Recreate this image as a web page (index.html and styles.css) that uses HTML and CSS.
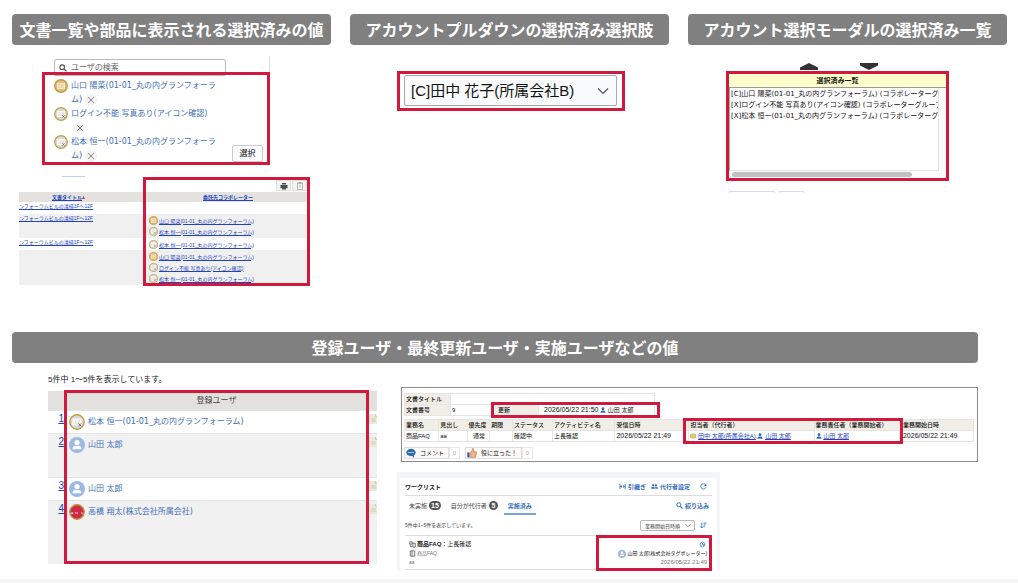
FILE: index.html
```html
<!DOCTYPE html>
<html lang="ja">
<head>
    <meta charset="UTF-8">
    <meta name="viewport" content="width=device-width, initial-scale=1.0">
    <title>ユーザ表示箇所の一覧</title>
    <link rel="stylesheet" href="styles.css">
</head>
<body>
    <!-- 共通アイコン -->
    <svg class="sprite" aria-hidden="true">
        <symbol id="user-gold" viewBox="0 0 16 16">
            <circle cx="8" cy="8" r="7.2" fill="#d9b974" stroke="#bf9a45" stroke-width="1.4"/>
            <rect x="4" y="4.8" width="8" height="6.4" fill="#e6cf9b" stroke="#fff8e6" stroke-width=".8"/>
            <path d="M5.5 6.2v3.4M7 7h2M7 9h2M10.5 6.2v3.4" stroke="#fff8e6" stroke-width=".8"/>
        </symbol>
        <symbol id="user-photo" viewBox="0 0 16 16">
            <circle cx="8" cy="8" r="7.2" fill="#d8d8d8" stroke="#c4a044" stroke-width="1.4"/>
            <rect x="4" y="5" width="8" height="6" fill="#e6e6e6" stroke="#fff" stroke-width=".9"/>
            <path d="M5.5 6.5v3M7 7h2" stroke="#fff" stroke-width=".8"/>
            <path d="M9.5 9.5l2.6 2.6M12.1 9.5l-2.6 2.6" stroke="#555" stroke-width=".8"/>
        </symbol>
        <symbol id="user-blue" viewBox="0 0 16 16">
            <circle cx="8" cy="8" r="8" fill="#9db9e2"/>
            <circle cx="8" cy="5.6" r="2.6" fill="#fff"/>
            <path d="M3.6 12.2c0-2.4 1.5-3.4 2.7-3.4.5.5 2.9.5 3.4 0 1.2 0 2.7 1 2.7 3.4z" fill="#fff"/>
        </symbol>
        <symbol id="user-red" viewBox="0 0 16 16">
            <circle cx="8" cy="8" r="7.2" fill="#cf2b49" stroke="#c0913c" stroke-width="1.4"/>
            <path d="M2.2 8.2v2M3.6 8.2v2M6 9h3M13 8v2.2" stroke="#f3c6ce" stroke-width="1"/>
        </symbol>
        <symbol id="person" viewBox="0 0 8 8">
            <circle cx="4" cy="2.3" r="1.9" fill="#2f6fb5"/>
            <path d="M.6 7.6c0-2.3 1.3-3.1 3.4-3.1s3.4.8 3.4 3.1z" fill="#2f6fb5"/>
        </symbol>
        <symbol id="search" viewBox="0 0 8 8">
            <circle cx="3.2" cy="3.2" r="2.3" fill="none" stroke="currentColor" stroke-width="1.1"/>
            <path d="M5 5l2.4 2.4" stroke="currentColor" stroke-width="1.3"/>
        </symbol>
        <symbol id="chevron" viewBox="0 0 12 8">
            <path d="M1 1.5l5 5 5-5" fill="none" stroke="currentColor" stroke-width="1.2"/>
        </symbol>
        <symbol id="doc" viewBox="0 0 10 10">
            <path d="M0 0h6.5L9 2.5V10H0z" fill="#ece8d8"/>
            <path d="M6.5 0v2.5H9M2 5h5M2 7h5" fill="none" stroke="#cfcab6" stroke-width=".9"/>
        </symbol>
    </svg>

    <main>
        <div class="top">
            <section>
                <h2>文書一覧や部品に表示される選択済みの値</h2>
                <div class="picker">
                    <div class="picker-head">
                        <label class="search-box">
                            <svg><use href="#search"/></svg>
                            <input type="text" placeholder="ユーザの検索" aria-label="ユーザの検索">
                        </label>
                    </div>
                    <div class="mark picker-body">
                        <ul class="picked">
                            <li><svg class="avatar"><use href="#user-gold"/></svg><div>山口 陽菜(01-01_丸の内グランフォーラム)<button class="remove" aria-label="削除"><svg viewBox="0 0 8 8"><path d="M1 1l6 6M7 1l-6 6"/></svg></button></div></li>
                            <li><svg class="avatar"><use href="#user-photo"/></svg><div>ログイン不能 写真あり(アイコン確認)<button class="remove" aria-label="削除"><svg viewBox="0 0 8 8"><path d="M1 1l6 6M7 1l-6 6"/></svg></button></div></li>
                            <li><svg class="avatar"><use href="#user-photo"/></svg><div>松本 恒一(01-01_丸の内グランフォーラム)<button class="remove" aria-label="削除"><svg viewBox="0 0 8 8"><path d="M1 1l6 6M7 1l-6 6"/></svg></button></div></li>
                        </ul>
                        <button class="select-button">選択</button>
                    </div>
                </div>

                <div class="stub"></div>
                <div class="listing">
                    <div class="listing-tools">
                        <button aria-label="印刷"><svg viewBox="0 0 8 8"><path d="M2 1h4v1.500H2zM.5 3h7v3.200h-7zM2 6h4v1.500H2z" fill="#4a4e58"/></svg></button>
                        <button aria-label="クリップボード"><svg viewBox="0 0 8 8"><path d="M1.500 1h5v6.500h-5zM3 .6h2v1H3z" fill="#f6f6f2" stroke="#9a9a92" stroke-width=".7"/><path d="M3 3.500h2M3 5h2" stroke="#aaa" stroke-width=".6"/></svg></button>
                    </div>
                    <table class="docs">
                        <colgroup><col class="docs-title"><col class="docs-gap"><col></colgroup>
                        <thead>
                            <tr><th><a href="#">文書タイトル</a><svg class="sort-mark" viewBox="0 0 4 4"><path d="M2 0l2 4H0z" fill="#d33"/></svg></th><th></th><th><a href="#">委託先コラボレーター</a></th></tr>
                        </thead>
                        <tbody>
                            <tr><td><a href="#">ンフォーラムビルの清掃1F〜12F</a></td><td></td><td></td></tr>
                            <tr>
                                <td><a href="#">ンフォーラムビルの清掃1F〜12F</a></td><td></td>
                                <td>
                                    <div class="person"><svg><use href="#user-gold"/></svg><a href="#">山口 陽菜(01-01_丸の内グランフォーラム)</a></div>
                                    <div class="person"><svg><use href="#user-photo"/></svg><a href="#">松本 恒一(01-01_丸の内グランフォーラム)</a></div>
                                </td>
                            </tr>
                            <tr>
                                <td><a href="#">ンフォーラムビルの清掃1F〜12F</a></td><td></td>
                                <td><div class="person"><svg><use href="#user-photo"/></svg><a href="#">松本 恒一(01-01_丸の内グランフォーラム)</a></div></td>
                            </tr>
                            <tr>
                                <td></td><td></td>
                                <td>
                                    <div class="person"><svg><use href="#user-gold"/></svg><a href="#">山口 陽菜(01-01_丸の内グランフォーラム)</a></div>
                                    <div class="person"><svg><use href="#user-photo"/></svg><a href="#">ログイン不能 写真あり(アイコン確認)</a></div>
                                    <div class="person"><svg><use href="#user-photo"/></svg><a href="#">松本 恒一(01-01_丸の内グランフォーラム)</a></div>
                                </td>
                            </tr>
                        </tbody>
                    </table>
                    <div class="mark over over-docs"></div>
                </div>
            </section>

            <section>
                <h2>アカウントプルダウンの選択済み選択肢</h2>
                <div class="mark pulldown">
                    <select aria-label="アカウント">
                        <option>[C]田中 花子(所属会社B)</option>
                    </select>
                    <svg><use href="#chevron"/></svg>
                </div>
            </section>

            <section>
                <h2>アカウント選択モーダルの選択済み一覧</h2>
                <div class="arrows">
                    <svg viewBox="0 0 18 7"><path d="M0 7V4.500L9 0l9 4.500V7z" fill="#333"/></svg>
                    <svg viewBox="0 0 18 7"><path d="M0 0h18v2.500L9 7 0 2.500z" fill="#333"/></svg>
                </div>
                <div class="mark modal-list">
                    <label for="selected">選択済み一覧</label>
                    <select id="selected" multiple size="3">
                        <option>[C]山口 陽菜(01-01_丸の内グランフォーラム) (コラボレーターグループ)</option>
                        <option>[X]ログイン不能 写真あり(アイコン確認) (コラボレーターグループ)</option>
                        <option>[X]松本 恒一(01-01_丸の内グランフォーラム) (コラボレーターグループ)</option>
                    </select>
                    <div class="scroll"><div class="thumb"></div></div>
                </div>
                <div class="modal-buttons"><span class="wide"></span><span></span></div>
            </section>
        </div>

        <section class="bottom">
            <h2>登録ユーザ・最終更新ユーザ・実施ユーザなどの値</h2>
            <div class="columns">
                <div class="registered">
                    <p>5件中 1〜5件を表示しています。</p>
                    <div class="registered-wrap">
                        <table class="users">
                            <colgroup><col class="users-no"><col><col class="users-doc"></colgroup>
                            <thead><tr><th></th><th>登録ユーザ</th><th></th></tr></thead>
                            <tbody>
                                <tr><td><a href="#">1</a></td><td><div class="user"><svg><use href="#user-photo"/></svg>松本 恒一(01-01_丸の内グランフォーラム)</div></td><td><svg class="doc"><use href="#doc"/></svg></td></tr>
                                <tr class="tall"><td><a href="#">2</a></td><td><div class="user"><svg><use href="#user-blue"/></svg>山田 太郎</div></td><td><svg class="doc"><use href="#doc"/></svg></td></tr>
                                <tr><td><a href="#">3</a></td><td><div class="user"><svg><use href="#user-blue"/></svg>山田 太郎</div></td><td><svg class="doc"><use href="#doc"/></svg></td></tr>
                                <tr class="taller"><td><a href="#">4</a></td><td><div class="user"><svg><use href="#user-red"/></svg>高橋 翔太(株式会社所属会社)</div></td><td><svg class="doc"><use href="#doc"/></svg></td></tr>
                            </tbody>
                        </table>
                        <div class="mark over over-users"></div>
                    </div>
                </div>

                <div class="right">
                    <div class="document">
                        <div class="summary">
                            <table class="grid-table">
                                <colgroup><col class="w-label"><col class="w-no"><col class="w-label"><col></colgroup>
                                <tr><th>文書タイトル</th><td colspan="3"></td></tr>
                                <tr><th>文書番号</th><td>9</td><th class="updated">更新</th><td class="updated-by"><span class="date">2026/05/22 21:50</span> <svg class="mini"><use href="#person"/></svg> 山田 太郎</td></tr>
                            </table>
                            <div class="mark over over-updated"></div>
                        </div>
                        <div class="tasks">
                            <table class="grid-table">
                                <colgroup><col class="c1"><col class="c2"><col class="c3"><col class="c4"><col class="c5"><col class="c6"><col class="c7"><col class="c8"><col class="c9"><col></colgroup>
                                <tr><th>業務名</th><th>見出し</th><th>優先度</th><th>期限</th><th>ステータス</th><th>アクティビティ名</th><th>受信日時</th><th>担当者（代行者）</th><th>業務責任者（業務開始者）</th><th>業務開始日時</th></tr>
                                <tr>
                                    <td>商品FAQ</td><td>aa</td><td class="center">通常</td><td></td><td>確認中</td><td>上長確認</td>
                                    <td class="date">2026/05/22 21:49</td>
                                    <td><svg class="mini" viewBox="0 0 8 8"><rect x=".5" y="1.500" width="7" height="5" rx="1" fill="#f3dfab" stroke="#c79a3c"/><path d="M2 4h1.500M4.500 4H6" stroke="#a67c22"/></svg> <a href="#">田中 太郎(所属会社A)</a>,<svg class="mini"><use href="#person"/></svg> <a href="#">山田 太郎</a></td>
                                    <td><svg class="mini"><use href="#person"/></svg> <a href="#">山田 太郎</a></td>
                                    <td class="date">2026/05/22 21:49</td>
                                </tr>
                            </table>
                            <div class="mark over over-owner"></div>
                        </div>
                        <div class="reactions">
                            <button><svg viewBox="0 0 10 10"><ellipse cx="5" cy="4.500" rx="4.700" ry="3.700" fill="#2d6db4"/><path d="M5.500 7.500l2.500 2.200V7z" fill="#2d6db4"/><path d="M2.400 4.500h1.200M4.400 4.500h1.200M6.400 4.500h1.200" stroke="#fff" stroke-width="1.200"/></svg>コメント</button><span class="count">0</span>
                            <button class="like"><svg viewBox="0 0 10 10"><path d="M.3 4.500h2.200v5H.3z" fill="#2f5f98"/><path d="M3 4.800L5 3l.4-2.500c1.400-.3 1.600 1.200 1 3.300h3v1.500L8.600 9.300H3z" fill="#f2b48a" stroke="#b06f45" stroke-width=".6"/></svg>役に立った！</button><span class="count">0</span>
                        </div>
                    </div>

                    <div class="worklist">
                        <div class="card">
                            <div class="row card-head">
                                <h3>ワークリスト</h3>
                                <div class="actions">
                                    <a href="#"><svg viewBox="0 0 8 8"><path d="M1 1v6M7 1v6M1 4h1.800M5.200 4H7M2.800 2.600v2.800M5.200 2.600v2.800" fill="none" stroke="currentColor" stroke-width="1"/></svg>引継ぎ</a>
                                    <a href="#"><svg viewBox="0 0 8 8"><circle cx="2.500" cy="2.700" r="1.300" fill="currentColor"/><circle cx="5.700" cy="2.700" r="1.300" fill="currentColor"/><path d="M.2 6.500c0-3 4.200-3 4.200 0zM5 6.500c0-1-.2-1.400-.5-1.800 1.300-.9 3.300-.2 3.300 1.800z" fill="currentColor"/></svg>代行者設定</a>
                                    <button class="plain" aria-label="更新"><svg viewBox="0 0 8 8"><path d="M6.700 5A3 3 0 1 1 6.200 2" fill="none" stroke="currentColor"/><path d="M7.200.6v2.700H4.500z" fill="currentColor"/></svg></button>
                                </div>
                            </div>
                            <div class="row tabs">
                                <a href="#">未実施<b>15</b></a>
                                <a href="#">自分が代行者<b>5</b></a>
                                <a href="#" class="active">実施済み</a>
                                <a href="#" class="filter"><svg><use href="#search"/></svg>絞り込み</a>
                            </div>
                            <div class="row sorting">
                                <span>5件中1~5件を表示しています。</span>
                                <label class="sort">
                                    <select aria-label="並び順"><option>業務開始日時順</option></select>
                                    <svg viewBox="0 0 12 8"><use href="#chevron"/></svg>
                                </label>
                                <button class="plain" aria-label="降順"><svg viewBox="0 0 8 8"><path d="M2 .8v6M.5 5.200L2 6.900l1.500-1.700M4 1.200h3.600M4 3.300h2.600M4 5.400h1.500" fill="none" stroke="currentColor" stroke-width="1"/></svg></button>
                            </div>
                            <div class="item">
                                <div>
                                    <div class="item-title"><svg viewBox="0 0 8 8"><path d="M.8 1h3v2.500h-3zM1.500 3.500v3H4M4.500 2.500h2.700V7H4.500z" fill="none" stroke="#555" stroke-width=".9"/></svg><b>商品FAQ</b>：上長確認</div>
                                    <div class="muted"><svg viewBox="0 0 8 8"><path d="M1.500 1h5v6h-5zM3.500 1v6" fill="none" stroke="#666"/></svg>商品FAQ</div>
                                    <div class="muted">aa</div>
                                </div>
                                <div class="item-right">
                                    <div><svg viewBox="0 0 8 8"><circle cx="4" cy="4" r="2.800" fill="none" stroke="#5b8fd0"/><path d="M4 2.200V4h2.500M3 5l1 1 2-2" fill="none" stroke="#5b8fd0"/></svg></div>
                                    <div><svg class="item-user" viewBox="0 0 16 16"><use href="#user-blue"/></svg>山田 太郎(株式会社タグボレーター)</div>
                                    <div class="muted date">2026/05/22 21:49</div>
                                </div>
                            </div>
                        </div>
                        <div class="mark over over-item"></div>
                    </div>
                </div>
            </div>
        </section>
    </main>
    <footer></footer>
</body>
</html>
```

FILE: styles.css
```css
* {
    box-sizing: border-box;
}
body {
    margin: 0;
    background-color: #fff;
    color: #222;
    font-family: "Liberation Sans", "Noto Sans CJK JP", sans-serif;
    font-size: 8px;
    line-height: 14px;
}
.sprite {
    position: absolute;
    width: 0;
    height: 0;
}
h2 {
    margin: 0;
    height: 31px;
    border-radius: 4px;
    background-color: #808080;
    color: #fff;
    font-family: "Noto Sans CJK JP", sans-serif;
    font-size: 16px;
    font-weight: 700;
    line-height: 31px;
    text-align: center;
    white-space: nowrap;
}
button, input, select {
    font: inherit;
    color: inherit;
    margin: 0;
    padding: 0;
    appearance: none;
}
a {
    color: #2342c0;
}
table {
    width: 100%;
    border-collapse: collapse;
    table-layout: fixed;
}
th, td {
    padding: 0;
    text-align: left;
    vertical-align: top;
}
/* 赤枠 */
.mark {
    border: 3px solid #cf1a3e;
}
.over {
    position: absolute;
    pointer-events: none;
}
.top {
    display: grid;
    grid-template-columns: repeat(3, 1fr);
    gap: 19px;
    padding: 14px 11px 0 12px;
}

/* ユーザ選択部品 */
.picker {
    margin: 11px 61px 0 30px;
    font-family: "DejaVu Sans", "Noto Sans CJK JP", sans-serif;
}
.picker-head {
    height: 16px;
    padding: 3px 43px 0 12px;
    border-right: 1px solid #ddd;
}
.search-box {
    display: flex;
    align-items: center;
    gap: 4px;
    height: 17px;
    padding-left: 4px;
    border: 1px solid #bbb;
    border-radius: 2px;
    color: #555;
}
.search-box svg {
    width: 8px;
    height: 8px;
}
.search-box input {
    flex: 1;
    min-width: 0;
    border: 0;
    background: none;
    line-height: 14px;
}
.search-box input::placeholder {
    color: #666;
}
.picker-body {
    position: relative;
    display: flex;
    justify-content: space-between;
    align-items: flex-end;
    height: 93px;
    padding: 4px 4px 0 9px;
}
.picked {
    align-self: flex-start;
    margin: 0;
    padding: 0;
    list-style: none;
    color: #3f6fb8;
}
.picked li {
    display: flex;
    gap: 3px;
    height: 28px;
}
.picked li div {
    width: 149px;
}
.avatar {
    flex: none;
    width: 14px;
    height: 14px;
}
.remove {
    display: inline-flex;
    align-items: center;
    justify-content: center;
    width: 12px;
    height: 12px;
    margin-left: 3px;
    border: 0;
    border-radius: 50%;
    background-color: #f3f3f3;
    vertical-align: middle;
}
.remove svg {
    width: 8px;
    height: 8px;
    fill: none;
    stroke: #888;
    stroke-width: 1;
}
.select-button {
    width: 31px;
    height: 17px;
    border: 1px solid #ccc;
    border-radius: 2px;
    background-color: #fafbfc;
    line-height: 15px;
    color: #111;
}
.stub {
    width: 23px;
    height: 1px;
    margin: 11px 0 0 50px;
    background-color: #bcd3ec;
}

/* 文書一覧 */
.listing {
    position: relative;
    margin: 0 21px 0 7px;
    font-size: 5px;
    line-height: 8px;
}
.listing-tools {
    display: flex;
    justify-content: flex-end;
    gap: 1px;
    height: 15px;
    padding: 3px 3px 0 0;
}
.listing-tools button {
    display: flex;
    align-items: center;
    justify-content: center;
    width: 15px;
    height: 11px;
    border: 1px solid #e2e2df;
    background-color: #f3f3f1;
}
.listing-tools svg {
    width: 8px;
    height: 8px;
}
.docs-title {
    width: 99px;
}
.docs-gap {
    width: 28px;
}
.docs th {
    height: 10px;
    background-color: #e3e2de;
    text-align: center;
    vertical-align: middle;
    white-space: nowrap;
}
.docs .sort-mark {
    width: 3px;
    height: 3px;
}
.docs td {
    height: 12px;
    white-space: nowrap;
    overflow: hidden;
}
.docs tbody tr:nth-child(even) {
    background-color: #f0f0f0;
}
.docs td:last-child {
    padding: 1px 0 0 3px;
}
.docs tr:nth-child(even) td:last-child {
    padding-bottom: 1px;
}
.person {
    display: flex;
    align-items: center;
    gap: 1px;
    height: 11px;
}
.person svg {
    width: 9px;
    height: 9px;
}
.over-docs {
    inset: 0 0 -1px 124px;
}

/* プルダウン */
.pulldown {
    position: relative;
    margin: 26px 44px 0 47px;
    padding: 1px 5px 2px 4px;
}
.pulldown select {
    display: block;
    width: 100%;
    height: 31px;
    padding-left: 6px;
    border: 1px solid #aaa;
    border-radius: 2px;
    background-color: #f9fafc;
    color: #111;
    font-size: 15px;
    line-height: 28px;
}
.pulldown svg {
    position: absolute;
    top: 13px;
    right: 13px;
    width: 12px;
    height: 8px;
    color: #555;
}

/* 選択モーダル */
.arrows {
    display: flex;
    justify-content: center;
    gap: 42px;
    margin: 18px 18px 0 0;
}
.arrows svg {
    width: 18px;
    height: 7px;
}
.modal-list {
    margin: 1px 58px 0 38px;
    background-color: #fafafa;
    font-size: 7px;
}
.modal-list label {
    display: block;
    height: 14px;
    border-bottom: 1px solid #999;
    background-color: #ffffcb;
    color: #111;
    font-weight: 700;
    line-height: 13px;
    text-align: center;
}
.modal-list select {
    display: block;
    width: calc(100% - 7px);
    height: 83px;
    border: 0;
    border-left: 1px solid #aaa;
    border-right: 1px solid #e5e5e5;
    border-bottom: 1px solid #e5e5e5;
    border-radius: 0;
    background-color: #fff;
    color: #111;
    font-family: "DejaVu Sans", "Noto Sans CJK JP", sans-serif;
    overflow: hidden;
}
.modal-list option {
    height: 11px;
    min-height: 11px;
    padding: 0 1px;
    line-height: 11px;
    overflow: hidden;
}
.scroll {
    height: 7px;
    padding: 1px 34px 1px 3px;
}
.thumb {
    height: 5px;
    border-radius: 3px;
    background-color: #c1c1c1;
}
.modal-buttons {
    display: flex;
    gap: 4px;
    margin: 10px 0 0 41px;
}
.modal-buttons span {
    width: 25px;
    height: 2px;
    border: 1px solid #ddd;
    border-bottom: 0;
}
.modal-buttons .wide {
    width: 46px;
}

/* 下段 */
.bottom {
    margin: 47px 40px 0 12px;
}
.columns {
    display: grid;
    grid-template-columns: 329fr 577fr;
    gap: 24px;
    padding-left: 36px;
}
.registered p {
    margin: 10px 0 4px;
}
.registered-wrap {
    position: relative;
}
.users-no {
    width: 16px;
}
.users-doc {
    width: 8px;
}
.users th {
    height: 19px;
    background-color: #e3e1de;
    color: #444;
    font-weight: 400;
    line-height: 19px;
    text-align: center;
}
.users td {
    height: 23px;
    padding-top: 3px;
    border-top: 1px solid #e4e4e4;
    overflow: hidden;
}
.users td:first-child {
    text-align: right;
    font-size: 10px;
    line-height: 10px;
}
.users tr:nth-child(even) td {
    background-color: #f1f1f1;
}
.users .tall td {
    height: 44px;
}
.users .taller td {
    height: 63px;
}
.user {
    display: flex;
    align-items: center;
    gap: 3px;
    height: 16px;
    padding-left: 5px;
    color: #3f6fb8;
    font-family: "DejaVu Sans", "Noto Sans CJK JP", sans-serif;
}
.user svg {
    width: 16px;
    height: 16px;
}
.doc {
    display: block;
    width: 10px;
    height: 10px;
}
.over-users {
    inset: -1px 8px 0 16px;
}

/* 文書詳細 */
.right {
    font-size: 6px;
    line-height: 10px;
}
.document {
    height: 75px;
    margin-top: 24px;
    padding: 5px 3px 0 2px;
    border: 1px solid #8c8c8c;
    color: #111;
}
.summary {
    position: relative;
    width: 44%;
}
.grid-table th, .grid-table td {
    height: 11px;
    padding-left: 1px;
    border: 1px solid #e6e4e0;
    white-space: nowrap;
}
.grid-table th {
    background-color: #f1eee8;
    font-weight: 500;
}
.grid-table .center {
    text-align: center;
}
.grid-table .updated {
    padding-left: 5px;
}
.grid-table .updated-by {
    padding-left: 5px;
}
.grid-table th:nth-child(10), .grid-table td:nth-child(10) {
    padding-left: 3px;
}
.date {
    font-size: 7px;
}
.mini {
    width: 6px;
    height: 6px;
    vertical-align: middle;
}
.w-label {
    width: 46px;
}
.w-no {
    width: 42px;
}
.over-updated {
    inset: 9px -5px -2px 87px;
}
.tasks {
    position: relative;
    margin-top: 3px;
}
.c1 { width: 6%; }
.c2 { width: 5%; }
.c3 { width: 4%; }
.c4 { width: 4%; }
.c5 { width: 7%; }
.c6 { width: 11%; }
.c7 { width: 13%; }
.c8 { width: 22%; }
.c9 { width: 15%; }
.over-owner {
    inset: -1px 71px -2px 49%;
}
.reactions {
    display: flex;
    margin-top: 5px;
}
.reactions button {
    display: flex;
    align-items: center;
    gap: 4px;
    height: 12px;
    padding: 0 4px 0 1px;
    border: 1px solid #ddd;
    background-color: #fbfaf8;
}
.reactions .like {
    margin-left: 5px;
}
.reactions svg {
    width: 10px;
    height: 10px;
}
.count {
    width: 11px;
    height: 12px;
    border: 1px solid #e8e8e8;
    color: #aaa;
    text-align: center;
}

/* ワークリスト */
.worklist {
    position: relative;
    width: 56%;
    margin-top: 10px;
    margin-left: -4px;
    padding: 6px 3px 0;
    background-color: #f4f5f7;
}
.card {
    padding: 0 5px 1px;
    border-radius: 2px 2px 0 0;
    background-color: #fff;
}
.card svg {
    width: 7px;
    height: 7px;
    flex: none;
}
.card a {
    text-decoration: none;
}
.row {
    display: flex;
    align-items: center;
}
.card-head {
    justify-content: space-between;
    height: 18px;
    border-bottom: 1px solid #ddd;
}
.card h3 {
    margin: 0;
    font-size: 6px;
}
.actions {
    display: flex;
    align-items: center;
    gap: 5px;
    padding-right: 5px;
}
.actions a, .filter {
    display: flex;
    align-items: center;
    gap: 2px;
    color: #3470c0;
    font-weight: 700;
}
.plain {
    display: flex;
    border: 0;
    background: none;
    color: #3470c0;
}
.actions .plain {
    margin-left: 5px;
}
.tabs {
    height: 19px;
    gap: 2px;
    padding-right: 3px;
}
.tabs a {
    display: flex;
    align-items: center;
    height: 19px;
    padding: 0 4px;
    color: #444;
}
.tabs a b {
    min-width: 9px;
    height: 9px;
    margin-left: 2px;
    padding: 0 2px;
    border-radius: 5px;
    background-color: #555;
    color: #fff;
    font-size: 7px;
    line-height: 9px;
    text-align: center;
}
.tabs .active {
    padding-top: 2px;
    border-bottom: 2px solid #7ba2d8;
    color: #3470c0;
    font-weight: 700;
}
.tabs .filter {
    margin-left: auto;
    padding: 0;
    color: #3470c0;
}
.sorting {
    height: 21px;
    gap: 5px;
    padding-right: 5px;
    border-bottom: 1px solid #ddd;
    color: #444;
    font-size: 5px;
}
.sort {
    position: relative;
    margin-left: auto;
}
.sort select {
    display: block;
    width: 55px;
    height: 11px;
    padding-left: 4px;
    border: 1px solid #bbb;
    border-radius: 2px;
    background-color: #fff;
}
.sort svg {
    position: absolute;
    top: 3px;
    right: 4px;
    width: 6px;
    height: 5px;
}
.item {
    display: flex;
    justify-content: space-between;
    padding: 4px 5px 2px 4px;
    border-bottom: 1px solid #ddd;
    line-height: 9px;
}
.item div div {
    display: flex;
    align-items: center;
    height: 9px;
}
.item svg {
    margin-right: 1px;
}
.item-right {
    font-size: 5px;
}
.item .item-right div {
    justify-content: flex-end;
}
.item .item-user {
    width: 8px;
    height: 8px;
}
.muted {
    color: #777;
    font-size: 5px;
}
.item-right .date {
    font-size: 6px;
}
.over-item {
    inset: 63px 8px 0 auto;
    width: 116px;
}
footer {
    height: 4px;
    margin-top: 8px;
    background-color: #f5f5f5;
}
```
